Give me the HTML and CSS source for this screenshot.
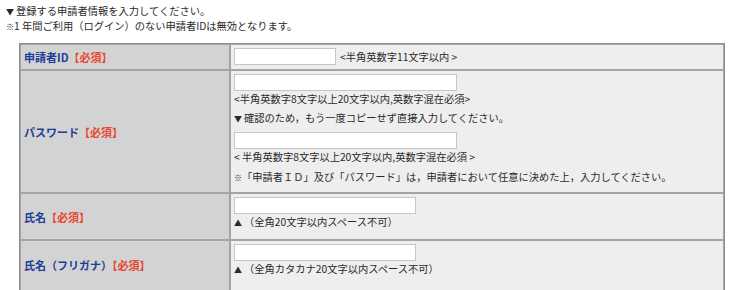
FILE: index.html
```html
<!DOCTYPE html>
<html lang="ja">
<head>
<meta charset="utf-8">
<title>申請者情報</title>
<link rel="stylesheet" href="styles.css">
</head>
<body>
<div class="intro">
  <p class="intro-line"><span class="mark">▼</span>登録する申請者情報を入力してください。</p>
  <p class="intro-line"><span class="kome">※</span>1 年間ご利用（ログイン）のない申請者IDは無効となります。</p>
</div>
<table class="form">
  <tr>
    <th class="label">申請者ID<span class="req">【必須】</span></th>
    <td class="field field-id">
      <div class="inline-row">
        <input class="in in-id" type="text">
        <span class="hint">&lt;半角英数字11文字以内 &gt;</span>
      </div>
    </td>
  </tr>
  <tr>
    <th class="label">パスワード<span class="req">【必須】</span></th>
    <td class="field field-pw">
      <input class="in in-pw" type="password">
      <div class="note">&lt;半角英数字8文字以上20文字以内,英数字混在必須&gt;</div>
      <div class="note note-para"><span class="mark">▼</span>確認のため，もう一度コピーせず直接入力してください。</div>
      <input class="in in-pw in-pw2" type="password">
      <div class="note">&lt; 半角英数字8文字以上20文字以内,英数字混在必須 &gt;</div>
      <div class="note note-last"><span class="kome">※</span>「申請者ＩＤ」及び「パスワード」は，申請者において任意に決めた上，入力してください。</div>
    </td>
  </tr>
  <tr>
    <th class="label">氏名<span class="req">【必須】</span></th>
    <td class="field field-name">
      <input class="in in-name" type="text">
      <div class="note"><span class="mark">▲</span>（全角20文字以内スペース不可）</div>
    </td>
  </tr>
  <tr>
    <th class="label label-kana">氏名（フリガナ）<span class="req">【必須】</span></th>
    <td class="field field-name field-kana">
      <input class="in in-name" type="text">
      <div class="note"><span class="mark">▲</span>（全角カタカナ20文字以内スペース不可）</div>
    </td>
  </tr>
</table>
</body>
</html>
```
FILE: styles.css
```css
body {
  margin: 0;
  padding: 3px 6px 0;
  font-family: "Noto Sans CJK JP", "Noto Sans", sans-serif;
  font-size: 10.25px;
  color: #2a2a2a;
  background: #ffffff;
}

.intro-line {
  margin: 0;
  line-height: 15px;
}

.kome {
  font-size: 8px;
  line-height: 1;
  color: #222222;
}

.mark {
  display: inline-block;
  width: 10px;
  font-size: 8px;
  line-height: 1;
  text-align: left;
}

.form {
  margin: 10px 0 0 13px;
  width: 706px;
  border-collapse: separate;
  border-spacing: 0;
  border: 1px solid #8e8e8e;
}

.label,
.field {
  border: 1px solid #a4a4a4;
}

.label {
  width: 205px;
  padding: 0 0 0 3px;
  background: #d3d3d3;
  text-align: left;
  vertical-align: middle;
  font-size: 11px;
  font-weight: bold;
  color: #1d3d99;
}

.label-kana {
  vertical-align: top;
  padding-top: 16px;
}

.req {
  color: #e8472f;
}

.field {
  background: #eeeeee;
  padding: 3px 3px 3px;
  vertical-align: top;
}

.field-id {
  padding-bottom: 4px;
}

.field-pw {
  padding-bottom: 8px;
}

.field-name {
  padding-bottom: 10px;
}

.field-kana {
  padding-bottom: 20px;
}

.inline-row {
  display: flex;
  align-items: center;
  gap: 4px;
}

.in {
  display: block;
  box-sizing: border-box;
  height: 17px;
  margin: 0;
  padding: 0 2px;
  border: 1px solid #c6c6c6;
  background: #ffffff;
  font: inherit;
}

.in-id {
  width: 102px;
}

.in-pw {
  width: 223px;
}

.in-pw2 {
  margin-top: 7px;
}

.in-name {
  width: 182px;
}

.hint {
  line-height: 14px;
}

.note {
  margin-top: 1px;
  line-height: 14px;
}

.note-para {
  margin-top: 5px;
}

.note-last {
  margin-top: 6px;
}
```
